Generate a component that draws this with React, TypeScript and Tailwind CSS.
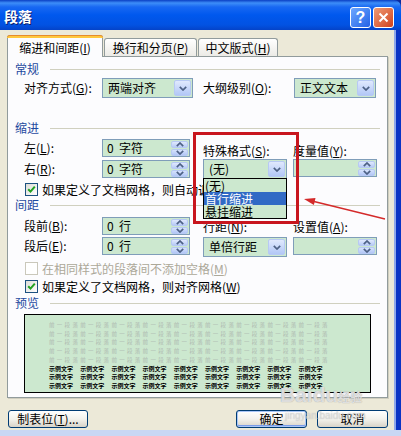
import React from 'react';

// mnemonic letter, underlined like a Windows accelerator key
function U({ c }: { c: string }) {
  return <span className="underline decoration-[1px] underline-offset-[1px]">{c}</span>;
}

function Mn({ text, k, tail = ':' }: { text: string; k: string; tail?: string }) {
  return (
    <>
      {text}(<U c={k} />){tail}
    </>
  );
}

function Chevron({ up = false }: { up?: boolean }) {
  return (
    <svg width="8" height="5" viewBox="0 0 8 5">
      <path
        d={up ? 'M0.8 4.2 L4 1 L7.2 4.2' : 'M0.8 0.8 L4 4 L7.2 0.8'}
        stroke="#4D6185"
        strokeWidth="1.7"
        fill="none"
      />
    </svg>
  );
}

function Combo({ value, w }: { value: string; w: string }) {
  return (
    <div className={`flex h-[20px] items-stretch border border-[#7F9DB9] bg-[#CCE8CF] p-px ${w}`}>
      <span className="flex flex-1 items-center pl-[4px] text-[12px] leading-none">{value}</span>
      <div className="flex w-[17px] items-center justify-center rounded-[2px] border border-[#B7C9F4] bg-linear-to-b from-[#E0E9FD] to-[#B2C7F6]">
        <Chevron />
      </div>
    </div>
  );
}

function Spin({ value, w }: { value: string; w: string }) {
  return (
    <div className={`flex h-[18px] items-stretch border border-[#7F9DB9] bg-[#CCE8CF] p-px ${w}`}>
      <span className="flex flex-1 items-center pl-[3px] text-[12px] leading-none whitespace-pre">{value}</span>
      <div className="flex w-[17px] flex-col gap-px">
        <div className="flex flex-1 items-center justify-center rounded-[2px] border border-[#B7C9F4] bg-linear-to-b from-[#E0E9FD] to-[#B8CBF6]">
          <Chevron up />
        </div>
        <div className="flex flex-1 items-center justify-center rounded-[2px] border border-[#B7C9F4] bg-linear-to-b from-[#D6E2FC] to-[#B2C7F6]">
          <Chevron />
        </div>
      </div>
    </div>
  );
}

function Check({ checked = false, disabled = false }: { checked?: boolean; disabled?: boolean }) {
  return (
    <div
      className={`flex h-[13px] w-[13px] shrink-0 items-center justify-center border ${
        disabled ? 'border-[#CAC8BB] bg-white' : 'border-[#1C5180] bg-linear-to-br from-[#DCDCD7] to-white'
      }`}
    >
      {checked && (
        <svg width="9" height="9" viewBox="0 0 9 9">
          <path d="M1.2 4.2 L3.5 6.6 L7.8 1.6" stroke="#21A121" strokeWidth="2" fill="none" />
        </svg>
      )}
    </div>
  );
}

function Group({ title }: { title: string }) {
  return (
    <div className="flex h-[14px] items-center pl-[7px] pr-[7px]">
      <span className="text-[12px] leading-none text-[#1F4AA0]">{title}</span>
      <div className="ml-[11px] h-px flex-1 bg-[#D0D0BF]" />
    </div>
  );
}

function Btn({ children, w, primary = false }: { children: React.ReactNode; w: string; primary?: boolean }) {
  return (
    <div
      className={`flex h-[18px] items-center justify-center rounded-[3px] border border-[#003C74] bg-linear-to-b from-white via-[#F3F2EC] to-[#D8D3C8] text-[12px] leading-none ${w} ${
        primary ? 'shadow-[inset_0_0_0_1px_#A9C6F7,inset_0_-1px_0_1px_#7A9CE8]' : ''
      }`}
    >
      {children}
    </div>
  );
}

const grayLine = '前一段落'.repeat(9);

export default function App() {
  return (
    <div className="relative h-[436px] w-[401px] overflow-hidden bg-[#0B2A9E] font-['Noto_Sans_CJK_SC',sans-serif] text-[12px] leading-none text-black">
      {/* title bar */}
      <div className="flex h-[30px] items-center rounded-tr-[7px] bg-[linear-gradient(to_bottom,#0A3FC4_0px,#3D8EF8_3px,#1868F2_7px,#0058EE_15px,#0252E2_25px,#0443C8_30px)] pl-[4px]">
        <span className="pt-[2px] text-[14px] font-bold text-white [text-shadow:1px_1px_#0A1E6B]">段落</span>
        <div className="ml-auto mr-[7px] mt-[5px] flex gap-[2px]">
          <div className="flex h-[21px] w-[21px] items-center justify-center rounded-[3px] border border-white bg-linear-to-br from-[#6EA8FF] to-[#2360E6] font-['Liberation_Sans',sans-serif] text-[16px] font-bold text-white">
            ?
          </div>
          <div className="flex h-[21px] w-[21px] items-center justify-center rounded-[3px] border border-white bg-linear-to-br from-[#EE9A74] to-[#CF3E17]">
            <svg width="11" height="11" viewBox="0 0 11 11">
              <path d="M1.5 1.5 L9.5 9.5 M9.5 1.5 L1.5 9.5" stroke="white" strokeWidth="2" />
            </svg>
          </div>
        </div>
      </div>

      <div className="flex h-[400px]">
        <div className="flex w-[394px] flex-col bg-[#ECE9D8] pt-[5px]">
          {/* tabs */}
          <div className="relative z-10 flex h-[21px] items-end pl-[7px]">
            <div className="relative -mb-px flex h-[22px] w-[96px] items-center justify-center rounded-t-[3px] border border-b-0 border-[#919B9C] bg-[#FCFCFE] pt-[2px]">
              <div className="absolute -left-px -right-px -top-px h-[3px] rounded-t-[3px] border-t border-[#E68B2C] bg-[#FFC83C]" />
              <Mn text="缩进和间距" k="I" tail="" />
            </div>
            <div className="ml-px flex h-[18px] w-[93px] items-center justify-center rounded-t-[3px] border border-b-0 border-[#919B9C] bg-linear-to-b from-white to-[#ECEBE6] pt-px">
              <Mn text="换行和分页" k="P" tail="" />
            </div>
            <div className="ml-px flex h-[18px] w-[80px] items-center justify-center rounded-t-[3px] border border-b-0 border-[#919B9C] bg-linear-to-b from-white to-[#ECEBE6] pt-px">
              <Mn text="中文版式" k="H" tail="" />
            </div>
          </div>

          {/* tab page */}
          <div className="ml-[7px] flex h-[342px] w-[381px] flex-col border border-[#919B9C] bg-[#FCFCFE] shadow-[1px_1px_0_#D0CEBF]">
            <div className="mt-[5px]">
              <Group title="常规" />
            </div>
            <div className="mt-[2px] flex h-[20px] items-center pl-[16px]">
              <span className="w-[78px]">
                <Mn text="对齐方式" k="G" />
              </span>
              <Combo w="w-[91px]" value="两端对齐" />
              <span className="ml-[10px] w-[91px]">
                <Mn text="大纲级别" k="O" />
              </span>
              <Combo w="w-[82px]" value="正文文本" />
            </div>

            <div className="mt-[23px]">
              <Group title="缩进" />
            </div>
            <div className="flex pl-[16px]">
              <div className="flex flex-col gap-[3px] pt-[4px]">
                <div className="flex h-[18px] items-center">
                  <span className="w-[78px]">
                    <Mn text="左" k="L" />
                  </span>
                  <Spin w="w-[88px]" value="0  字符" />
                </div>
                <div className="flex h-[18px] items-center">
                  <span className="w-[78px]">
                    <Mn text="右" k="R" />
                  </span>
                  <Spin w="w-[88px]" value="0  字符" />
                </div>
              </div>
              <div className="ml-[13px] flex w-[84px] flex-col pt-[10px]">
                <span className="h-[12px] whitespace-nowrap">
                  <Mn text="特殊格式" k="S" />
                </span>
                <div className="relative mt-[2px]">
                  <Combo w="w-[84px]" value="(无)" />
                  {/* open drop-down list */}
                  <div className="absolute left-0 top-[19px] z-20 w-[84px] border border-black bg-[#CCE8CF]">
                    <div className="flex h-[13px] items-center pl-px">(无)</div>
                    <div className="flex h-[13px] items-center bg-[#316AC5] pl-px text-white">首行缩进</div>
                    <div className="flex h-[13px] items-center pl-px">悬挂缩进</div>
                  </div>
                </div>
              </div>
              <div className="ml-[6px] flex w-[84px] flex-col pt-[10px]">
                <span className="h-[12px] whitespace-nowrap">
                  <Mn text="度量值" k="Y" />
                </span>
                <div className="mt-[2px]">
                  <Spin w="w-[84px]" value="" />
                </div>
              </div>
            </div>
            <div className="mt-[4px] flex h-[13px] items-center gap-[4px] whitespace-nowrap pl-[17px]">
              <Check checked />
              <span>
                如果定义了文档网格，则自动调整右缩进(<U c="D" />)
              </span>
            </div>

            <div className="mt-[2px]">
              <Group title="间距" />
            </div>
            <div className="flex pl-[16px]">
              <div className="flex flex-col gap-[2px] pt-[5px]">
                <div className="flex h-[18px] items-center">
                  <span className="w-[78px]">
                    <Mn text="段前" k="B" />
                  </span>
                  <Spin w="w-[88px]" value="0  行" />
                </div>
                <div className="flex h-[18px] items-center">
                  <span className="w-[78px]">
                    <Mn text="段后" k="E" />
                  </span>
                  <Spin w="w-[88px]" value="0  行" />
                </div>
              </div>
              <div className="ml-[13px] flex w-[84px] flex-col pt-[9px]">
                <span className="h-[12px] whitespace-nowrap">
                  <Mn text="行距" k="N" />
                </span>
                <div className="mt-[4px]">
                  <Combo w="w-[84px]" value="单倍行距" />
                </div>
              </div>
              <div className="ml-[6px] flex w-[84px] flex-col pt-[9px]">
                <span className="h-[12px] whitespace-nowrap">
                  <Mn text="设置值" k="A" />
                </span>
                <div className="mt-[4px]">
                  <Spin w="w-[84px]" value="" />
                </div>
              </div>
            </div>
            <div className="mt-[5px] flex h-[13px] items-center gap-[4px] whitespace-nowrap pl-[17px] text-[#ACA899]">
              <Check disabled />
              <span>
                在相同样式的段落间不添加空格(<U c="M" />)
              </span>
            </div>
            <div className="mt-[5px] flex h-[13px] items-center gap-[4px] whitespace-nowrap pl-[17px]">
              <Check checked />
              <span>
                如果定义了文档网格，则对齐网格(<U c="W" />)
              </span>
            </div>

            <div className="mt-[3px]">
              <Group title="预览" />
            </div>
            <div className="ml-[16px] mt-[4px] h-[79px] w-[347px] border border-black bg-[#CCE8CF] pl-[24px] pt-[6px]">
              {[0, 1, 2, 3, 4].map((i) => (
                <div key={i} className="h-[8.7px] whitespace-nowrap text-[5.5px] leading-[8.7px] tracking-[2.3px] text-[#AEB8B0]">
                  {grayLine}
                </div>
              ))}
              {[0, 1, 2].map((i) => (
                <div key={i} className="flex h-[8.7px] items-center">
                  {Array.from({ length: 9 }).map((_, j) => (
                    <span key={j} className="w-[31.2px] shrink-0 text-[6px] font-bold leading-none">
                      示例文字
                    </span>
                  ))}
                </div>
              ))}
            </div>
          </div>

          {/* dialog buttons */}
          <div className="mt-[12px] flex pl-[8px] pr-[6px]">
            <Btn w="w-[80px]">
              制表位(<U c="T" />)...
            </Btn>
            <div className="ml-auto flex gap-[10px]">
              <Btn w="w-[71px]" primary>
                确定
              </Btn>
              <Btn w="w-[71px]">取消</Btn>
            </div>
          </div>
        </div>
        <div className="w-[7px] border-l-2 border-[#8FA8EA] bg-[#0B34C4]" />
      </div>
      <div className="h-[6px] bg-[#C9D7F4]" />

      {/* red highlight box and arrow */}
      <div className="pointer-events-none absolute left-[193px] top-[132px] z-30 h-[92px] w-[106px] border-[3px] border-[#C8161E]" />
      <svg className="pointer-events-none absolute left-0 top-0 z-30" width="401" height="436">
        <line x1="312" y1="201" x2="385" y2="219" stroke="#D42A2A" strokeWidth="1.3" />
        <polygon points="304,199 315.5,198 313.9,205" fill="#D42A2A" />
      </svg>

      {/* faint site watermark */}
      <div className="pointer-events-none absolute left-[280px] top-[384px] z-30 flex items-end text-white/70 [text-shadow:0_0_1px_#8A8A8A]">
        <span className="font-['Liberation_Sans',sans-serif] text-[21px] font-bold leading-none">Bai</span>
        <span className="font-['Liberation_Sans',sans-serif] text-[21px] font-bold leading-none">du</span>
        <span className="mb-[2px] text-[12px] font-bold leading-none">经验</span>
      </div>
      <div className="pointer-events-none absolute left-[285px] top-[411px] z-30 font-['Liberation_Sans',sans-serif] text-[10px] leading-none text-white/40 [text-shadow:0_0_1px_#B0B0B0]">
        jingyan.baidu.com
      </div>
    </div>
  );
}
